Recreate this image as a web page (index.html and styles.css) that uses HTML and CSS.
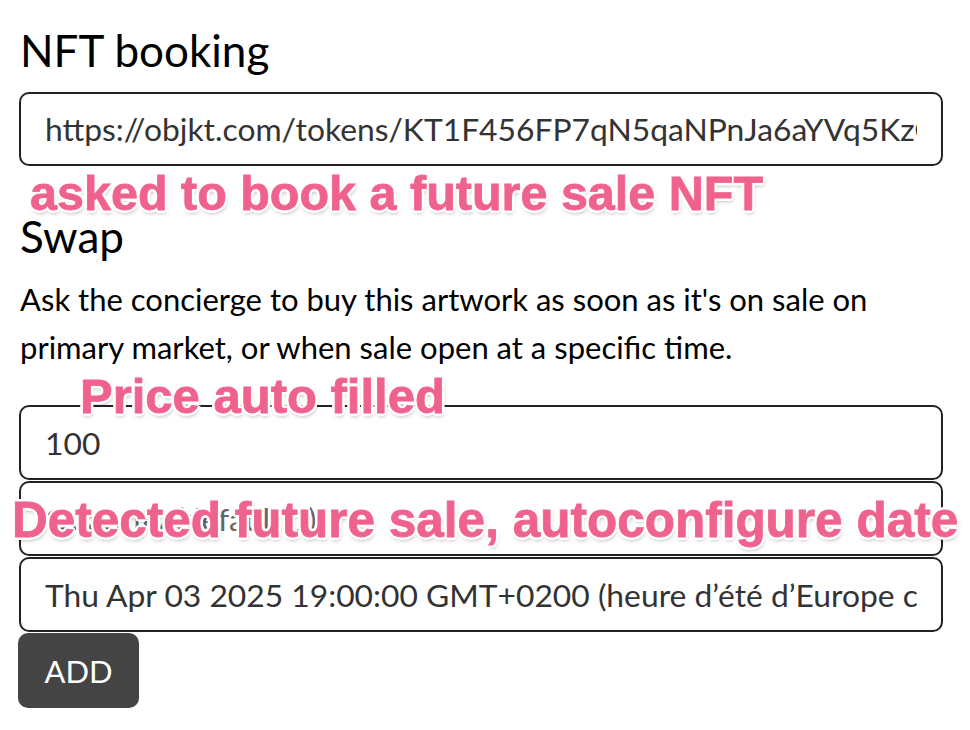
FILE: index.html
```html
<!DOCTYPE html>
<html lang="en">
<head>
    <meta charset="UTF-8">
    <meta name="viewport" content="width=device-width, initial-scale=1.0">
    <title>NFT booking</title>
    <link rel="stylesheet" href="styles.css">
</head>
<body>
    <div class="page">
        <h1 class="title">NFT booking</h1>
        <input class="field" type="text" value="https://objkt.com/tokens/KT1F456FP7qN5qaNPnJa6aYVq5KzQTtT4v9Y6xDyDoWHQ/12">

        <h2 class="title swap-title">Swap</h2>
        <p class="intro">Ask the concierge to buy this artwork as soon as it's on sale on primary market, or when sale open at a specific time.</p>

        <div class="fields">
            <input class="field" type="text" value="100">
            <input class="field" type="text" placeholder="Quantity (default 1)">
            <input class="field" type="text" value="Thu Apr 03 2025 19:00:00 GMT+0200 (heure d’été d’Europe centrale)">
        </div>
        <button class="add-btn">ADD</button>

        <!-- annotations drawn over the screenshot -->
        <span class="note note-book">asked to book a future sale NFT</span>
        <span class="note note-price">Price auto filled</span>
        <span class="note note-date">Detected future sale, autoconfigure date</span>
    </div>
</body>
</html>
```

FILE: styles.css
```css
body {
    margin: 0;
    background-color: #fff;
    font-family: Lato, "Open Sans", sans-serif;
    color: #000;
}
.page {
    position: relative;
    padding: 26px 27px 0 19px;
}
.title {
    margin: 0;
    font-size: 44px;
    font-weight: 400;
    line-height: 48px;
    padding-left: 1px;
}
.swap-title {
    margin-top: 46px;
}
.intro {
    margin: 15px 0 34px;
    padding-left: 1px;
    font-size: 31px;
    line-height: 48px;
    max-width: 880px;
}
.field {
    display: block;
    box-sizing: border-box;
    width: 924px;
    height: 74px;
    margin: 18px 0 0;
    padding: 0 24px;
    border: 2px solid #222;
    border-radius: 10px;
    background: #fff;
    font-family: Lato, sans-serif;
    font-size: 31.8px;
    color: #333;
    outline: none;
}
.field::placeholder {
    color: #666;
}
.fields .field {
    height: 75px;
    margin: 0 0 1px;
}
.add-btn {
    display: block;
    width: 121px;
    height: 75px;
    margin-left: -1px;
    border: none;
    border-radius: 10px;
    background-color: #444;
    color: #fff;
    font-family: Lato, sans-serif;
    font-size: 31px;
    cursor: pointer;
}
.note {
    position: absolute;
    font-family: "Liberation Sans", Arial, sans-serif;
    font-weight: 700;
    font-size: 49px;
    line-height: 1;
    color: #f0628e;
    white-space: nowrap;
    -webkit-text-stroke: 0.8px #f0628e;
    text-shadow:
        2px 0 0 #fff, -2px 0 0 #fff, 0 2px 0 #fff, 0 -2px 0 #fff,
        2px 2px 0 #fff, -2px -2px 0 #fff, 2px -2px 0 #fff, -2px 2px 0 #fff,
        3px 0 0 #fff, -3px 0 0 #fff, 0 3px 0 #fff, 0 -3px 0 #fff,
        1px 3px 4px rgba(0, 0, 0, 0.35);
}
.note-book {
    left: 30px;
    top: 169px;
    font-size: 48.5px;
}
.note-price {
    left: 80px;
    top: 372px;
}
.note-date {
    left: 12px;
    top: 495px;
    font-size: 49.5px;
}
```
